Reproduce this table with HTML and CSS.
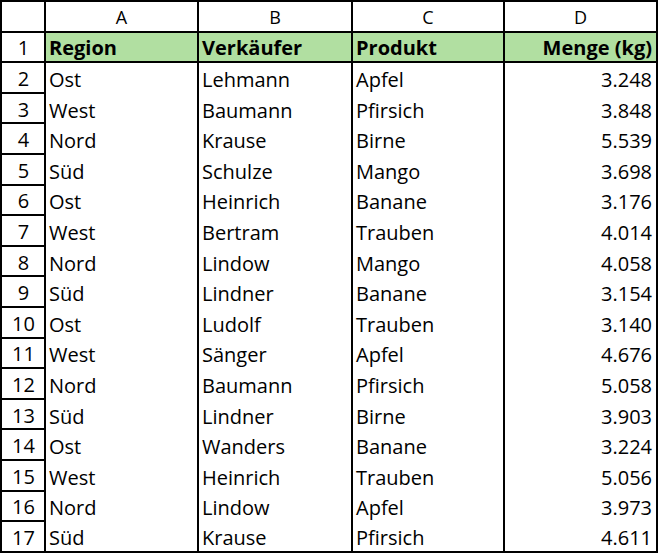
FILE: index.html
```html
<!DOCTYPE html>
<html lang="de">
<head>
<meta charset="utf-8">
<title>Tabelle</title>
<link rel="stylesheet" href="styles.css">
</head>
<body>
<div class="sheet">
  <div class="corner"></div>
  <div class="colhead">A</div>
  <div class="colhead">B</div>
  <div class="colhead">C</div>
  <div class="colhead end">D</div>

  <div class="rowhead">1</div>
  <div class="cell hdr">Region</div>
  <div class="cell hdr">Verkäufer</div>
  <div class="cell hdr">Produkt</div>
  <div class="cell hdr num end">Menge (kg)</div>

  <div class="rowhead">2</div><div class="cell">Ost</div><div class="cell">Lehmann</div><div class="cell">Apfel</div><div class="cell num end">3.248</div>
  <div class="rowhead">3</div><div class="cell">West</div><div class="cell">Baumann</div><div class="cell">Pfirsich</div><div class="cell num end">3.848</div>
  <div class="rowhead">4</div><div class="cell">Nord</div><div class="cell">Krause</div><div class="cell">Birne</div><div class="cell num end">5.539</div>
  <div class="rowhead">5</div><div class="cell">Süd</div><div class="cell">Schulze</div><div class="cell">Mango</div><div class="cell num end">3.698</div>
  <div class="rowhead">6</div><div class="cell">Ost</div><div class="cell">Heinrich</div><div class="cell">Banane</div><div class="cell num end">3.176</div>
  <div class="rowhead">7</div><div class="cell">West</div><div class="cell">Bertram</div><div class="cell">Trauben</div><div class="cell num end">4.014</div>
  <div class="rowhead">8</div><div class="cell">Nord</div><div class="cell">Lindow</div><div class="cell">Mango</div><div class="cell num end">4.058</div>
  <div class="rowhead">9</div><div class="cell">Süd</div><div class="cell">Lindner</div><div class="cell">Banane</div><div class="cell num end">3.154</div>
  <div class="rowhead">10</div><div class="cell">Ost</div><div class="cell">Ludolf</div><div class="cell">Trauben</div><div class="cell num end">3.140</div>
  <div class="rowhead">11</div><div class="cell">West</div><div class="cell">Sänger</div><div class="cell">Apfel</div><div class="cell num end">4.676</div>
  <div class="rowhead">12</div><div class="cell">Nord</div><div class="cell">Baumann</div><div class="cell">Pfirsich</div><div class="cell num end">5.058</div>
  <div class="rowhead">13</div><div class="cell">Süd</div><div class="cell">Lindner</div><div class="cell">Birne</div><div class="cell num end">3.903</div>
  <div class="rowhead">14</div><div class="cell">Ost</div><div class="cell">Wanders</div><div class="cell">Banane</div><div class="cell num end">3.224</div>
  <div class="rowhead">15</div><div class="cell">West</div><div class="cell">Heinrich</div><div class="cell">Trauben</div><div class="cell num end">5.056</div>
  <div class="rowhead">16</div><div class="cell">Nord</div><div class="cell">Lindow</div><div class="cell">Apfel</div><div class="cell num end">3.973</div>
  <div class="rowhead last">17</div><div class="cell">Süd</div><div class="cell">Krause</div><div class="cell">Pfirsich</div><div class="cell num end">4.611</div>
</div>
</body>
</html>
```
FILE: styles.css
```css
html, body {
  margin: 0;
  padding: 0;
  background: #ffffff;
}

.sheet {
  box-sizing: border-box;
  width: 658px;
  height: 553px;
  border: 2px solid #000;
  display: grid;
  grid-template-columns: 44px 153px 154px 152px 151px;
  grid-template-rows: repeat(17, 30.6px) 1fr;
  font-family: "Open Sans", "DejaVu Sans", sans-serif;
  color: #000;
  background: #fff;
}

.sheet > div {
  box-sizing: border-box;
  display: flex;
  align-items: center;
  white-space: nowrap;
  overflow: hidden;
}

.corner {
  border-right: 2px solid #000;
  border-bottom: 2px solid #000;
}

.colhead {
  justify-content: center;
  font-size: 18px;
  padding-top: 2px;
  border-right: 2px solid #000;
  border-bottom: 2px solid #000;
}

.rowhead {
  justify-content: center;
  font-size: 20px;
  padding-top: 2px;
  padding-left: 1px;
  border-right: 2px solid #000;
  border-bottom: 2px solid #000;
}

.rowhead.last {
  border-bottom: none;
}

.cell {
  font-size: 20px;
  padding: 2px 4px 0 3px;
  border-right: 2px solid #000;
}

.cell.hdr {
  font-weight: 700;
  background: #b1dfa1;
  border-bottom: 2px solid #000;
}

.num {
  justify-content: flex-end;
}

.end {
  border-right: none;
}
```
